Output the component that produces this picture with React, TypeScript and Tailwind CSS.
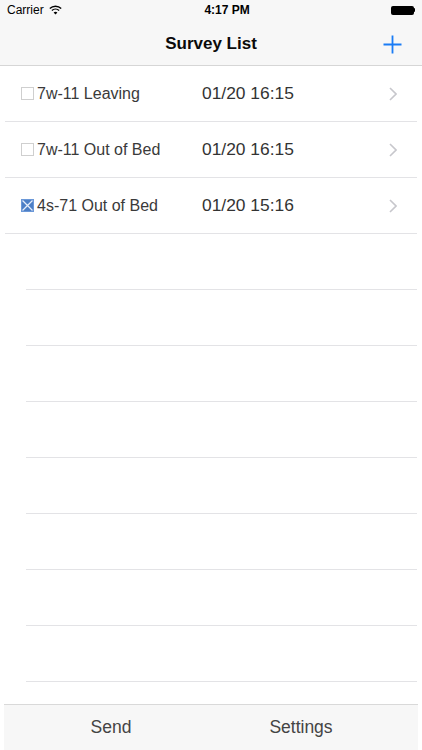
import React from "react";

const rows = [
  { label: "7w-11 Leaving", date: "01/20 16:15", checked: false },
  { label: "7w-11 Out of Bed", date: "01/20 16:15", checked: false },
  { label: "4s-71 Out of Bed", date: "01/20 15:16", checked: true },
];

function Box({ checked }: { checked: boolean }) {
  if (checked) {
    return (
      <svg width="13" height="13" viewBox="0 0 13 13" className="shrink-0">
        <rect x="0" y="0" width="13" height="13" fill="#4d7fc6" />
        <rect x="0.5" y="0.5" width="12" height="12" fill="none" stroke="#6b98d8" strokeWidth="1" />
        <path d="M1.5 1.5 L11.5 11.5 M11.5 1.5 L1.5 11.5" stroke="#e6eefa" strokeWidth="1.3" />
      </svg>
    );
  }
  return (
    <svg width="13" height="13" viewBox="0 0 13 13" className="shrink-0">
      <rect x="0.5" y="0.5" width="12" height="12" fill="#ffffff" stroke="#cfcfcf" strokeWidth="1" />
    </svg>
  );
}

export default function App() {
  return (
    <div
      className="w-[422px] h-[750px] flex flex-col bg-white overflow-hidden"
      style={{ fontFamily: '"Liberation Sans", Arial, sans-serif' }}
    >
      {/* status bar */}
      <div className="h-[20px] bg-[#f7f7f7] flex items-center px-[7px] relative">
        <div className="flex items-center gap-[5px]">
          <span className="text-[12px] text-black leading-none">Carrier</span>
          <svg width="13" height="10" viewBox="0 0 13 10">
            <path d="M0.8 3.6 A8 8 0 0 1 12.2 3.6" fill="none" stroke="#000" strokeWidth="1.4" />
            <path d="M2.9 5.6 A5.2 5.2 0 0 1 10.1 5.6" fill="none" stroke="#000" strokeWidth="1.4" />
            <path d="M6.5 9.6 L4.6 7.6 A2.7 2.7 0 0 1 8.4 7.6 Z" fill="#000" />
          </svg>
        </div>
        <div className="flex-1 flex justify-center">
          <span className="text-[12px] font-bold text-black leading-none ml-[2px]">4:17 PM</span>
        </div>
        <div className="flex items-center">
          <div className="w-[23px] h-[9px] bg-black rounded-[2px]" />
          <div className="w-[1.5px] h-[4px] bg-black rounded-r-[1px]" />
        </div>
      </div>

      {/* nav bar */}
      <div className="h-[46px] bg-[#f7f7f7] border-b border-[#d6d6d6] flex items-center relative">
        <div className="flex-1 flex justify-center">
          <span className="text-[17px] font-bold text-[#0a0a0a] leading-none pt-[1px]">Survey List</span>
        </div>
        <div className="absolute right-[20px] top-[15px]">
          <svg width="19" height="19" viewBox="0 0 19 19">
            <path d="M9.5 0.5 V18.5 M0.5 9.5 H18.5" stroke="#1a7cf5" strokeWidth="1.8" />
          </svg>
        </div>
      </div>

      {/* list */}
      <div className="flex-1 flex flex-col">
        {rows.map((r, i) => (
          <div key={i} className="h-[56px] flex flex-col">
            <div className="flex-1 flex items-center pl-[21px]">
              <Box checked={r.checked} />
              <span className="ml-[3px] w-[165px] text-[16px] text-[#3a3a3a] leading-none">{r.label}</span>
              <span className="text-[17.4px] text-[#333333] leading-none">{r.date}</span>
              <div className="flex-1" />
              <svg width="8" height="14" viewBox="0 0 8 14" className="mr-[25px]">
                <path d="M1 1 L7 7 L1 13" fill="none" stroke="#c7c7cc" strokeWidth="1.6" />
              </svg>
            </div>
            <div className="h-px bg-[#e3e3e6] ml-[5px] mr-[5px]" />
          </div>
        ))}
        {Array.from({ length: 8 }).map((_, i) => (
          <div key={"e" + i} className="h-[56px] flex flex-col">
            <div className="flex-1" />
            <div className="h-px bg-[#e3e3e6] ml-[26px] mr-[5px]" />
          </div>
        ))}
      </div>

      {/* tab bar */}
      <div className="h-[46px] mx-[4px] bg-[#f7f7f7] border-t border-[#d9d9d9] flex items-center pl-[12px] shrink-0">
        <div className="w-[190px] text-center text-[17.5px] text-[#444444] leading-none">Send</div>
        <div className="w-[190px] text-center text-[17.5px] text-[#444444] leading-none">Settings</div>
      </div>
    </div>
  );
}
